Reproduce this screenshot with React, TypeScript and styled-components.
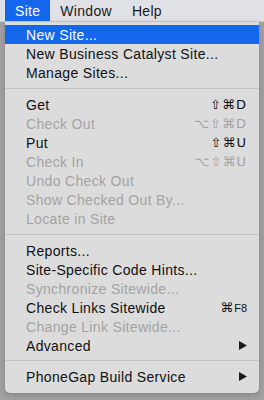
import React from 'react';
import styled, { createGlobalStyle } from 'styled-components';

const GlobalStyle = createGlobalStyle`
	html, body {
		margin: 0;
		padding: 0;
		background: #a2a2a2;
	}
	body {
		width: 264px;
		height: 400px;
		overflow: hidden;
		font-family: 'Liberation Sans', Arial, sans-serif;
	}
`;

const MenuBar = styled.div`
	display: flex;
	align-items: stretch;
	height: 21px;
	padding-left: 5px;
	background: #e0e1e6;
	border-bottom: 1px solid #c9c9cc;
`;

const BarItem = styled.div<{ $active?: boolean }>`
	display: flex;
	align-items: center;
	padding: 0 10px;
	font-size: 14px;
	letter-spacing: 0.3px;
	color: ${(p) => (p.$active ? '#fff' : '#1a1a1a')};
	background: ${(p) => (p.$active ? '#1466ec' : 'transparent')};
`;

const Menu = styled.div`
	margin-left: 5px;
	width: 254px;
	background: #dcdcdc;
	border-radius: 0 0 5px 5px;
	padding: 3px 0 7px;
	box-shadow: 0 2px 6px rgba(0, 0, 0, 0.2);
`;

const Row = styled.div<{ $disabled?: boolean; $active?: boolean }>`
	display: flex;
	align-items: center;
	justify-content: space-between;
	height: 19px;
	padding: 0 12px 0 21px;
	font-size: 14px;
	letter-spacing: 0.33px;
	color: ${(p) => (p.$active ? '#fff' : p.$disabled ? '#a3a3a3' : '#111')};
	background: ${(p) => (p.$active ? '#1466ec' : 'transparent')};
	white-space: nowrap;
`;

const Shortcut = styled.span`
	font-family: 'DejaVu Sans', 'Liberation Sans', sans-serif;
	font-size: 13px;
	letter-spacing: 1px;

	small {
		font-family: 'Liberation Sans', Arial, sans-serif;
		font-size: 11px;
		letter-spacing: 0;
	}
`;

const Separator = styled.div<{ $tight?: boolean }>`
	height: 1px;
	margin: ${(p) => (p.$tight ? '5px 0 6px' : '6px 0')};
	background: #c3c3c3;
`;

const Arrow = () => (
	<svg width="8" height="9" viewBox="0 0 8 9">
		<polygon points="0,0 8,4.5 0,9" fill="#1a1a1a" />
	</svg>
);

type Item =
	| { sep: true; tight?: boolean }
	| { label: string; key?: React.ReactNode; disabled?: boolean; active?: boolean; sub?: boolean; sep?: false };

const items: Item[] = [
	{ label: 'New Site...', active: true },
	{ label: 'New Business Catalyst Site...' },
	{ label: 'Manage Sites...' },
	{ sep: true },
	{ label: 'Get', key: '⇧⌘D' },
	{ label: 'Check Out', key: '⌥⇧⌘D', disabled: true },
	{ label: 'Put', key: '⇧⌘U' },
	{ label: 'Check In', key: '⌥⇧⌘U', disabled: true },
	{ label: 'Undo Check Out', disabled: true },
	{ label: 'Show Checked Out By...', disabled: true },
	{ label: 'Locate in Site', disabled: true },
	{ sep: true },
	{ label: 'Reports...' },
	{ label: 'Site-Specific Code Hints...' },
	{ label: 'Synchronize Sitewide...', disabled: true },
	{
		label: 'Check Links Sitewide',
		key: (
			<>
				⌘<small>F8</small>
			</>
		),
	},
	{ label: 'Change Link Sitewide...', disabled: true },
	{ label: 'Advanced', sub: true },
	{ sep: true, tight: true },
	{ label: 'PhoneGap Build Service', sub: true },
];

const App = () => {
	return (
		<>
			<GlobalStyle />
			<MenuBar>
				<BarItem $active>Site</BarItem>
				<BarItem>Window</BarItem>
				<BarItem>Help</BarItem>
			</MenuBar>
			<Menu>
				{items.map((item, index) =>
					item.sep ? (
						<Separator key={index} $tight={item.tight} />
					) : (
						<Row key={index} $disabled={item.disabled} $active={item.active}>
							<span>{item.label}</span>
							{item.key && <Shortcut>{item.key}</Shortcut>}
							{item.sub && <Arrow />}
						</Row>
					)
				)}
			</Menu>
		</>
	);
};

export default App;
